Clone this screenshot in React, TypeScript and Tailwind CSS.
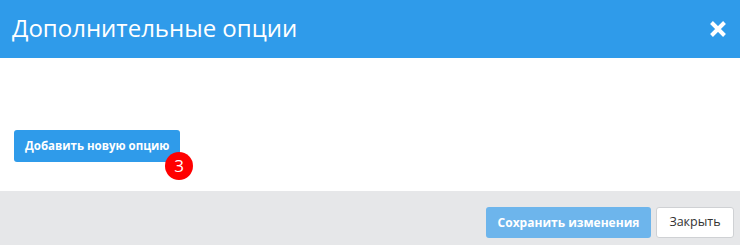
export default function App() {
  return (
    <div className="w-[740px] h-[245px] flex flex-col bg-white font-['Open_Sans',sans-serif]">
      {/* Header */}
      <div className="h-[58px] shrink-0 bg-[#2f9bea] flex items-center justify-between pl-[12px] pr-[13px]">
        <h1 className="text-[24px] text-white leading-none pb-[2px]">Дополнительные опции</h1>
        <svg width="18" height="18" viewBox="0 0 18 18" className="text-white">
          <path d="M2.5 2.5 L15.5 15.5 M15.5 2.5 L2.5 15.5" stroke="currentColor" strokeWidth="4" />
        </svg>
      </div>

      {/* Body */}
      <div className="h-[133px] shrink-0 flex items-start pl-[14px] pt-[72px]">
        <div className="relative">
          <button className="h-[32px] px-[11px] rounded-[3px] bg-[#2f9bea] text-white text-[11.5px] font-bold">
            Добавить новую опцию
          </button>
          <span className="absolute left-[151px] top-[22px] w-[28px] h-[28px] rounded-full bg-[#ff0000] text-white text-[17px] flex items-center justify-center">
            3
          </span>
        </div>
      </div>

      {/* Footer */}
      <div className="flex-1 bg-[#e6e7e9] flex items-start justify-end gap-[5px] pr-[6px] pt-[16px]">
        <button className="h-[31px] w-[165px] rounded-[3px] bg-[#6db5ec] text-white text-[12px] font-bold">
          Сохранить изменения
        </button>
        <button className="h-[31px] w-[78px] rounded-[3px] bg-white border border-[#cfd1d4] text-[#333] text-[12.5px]">
          Закрыть
        </button>
      </div>
    </div>
  );
}
